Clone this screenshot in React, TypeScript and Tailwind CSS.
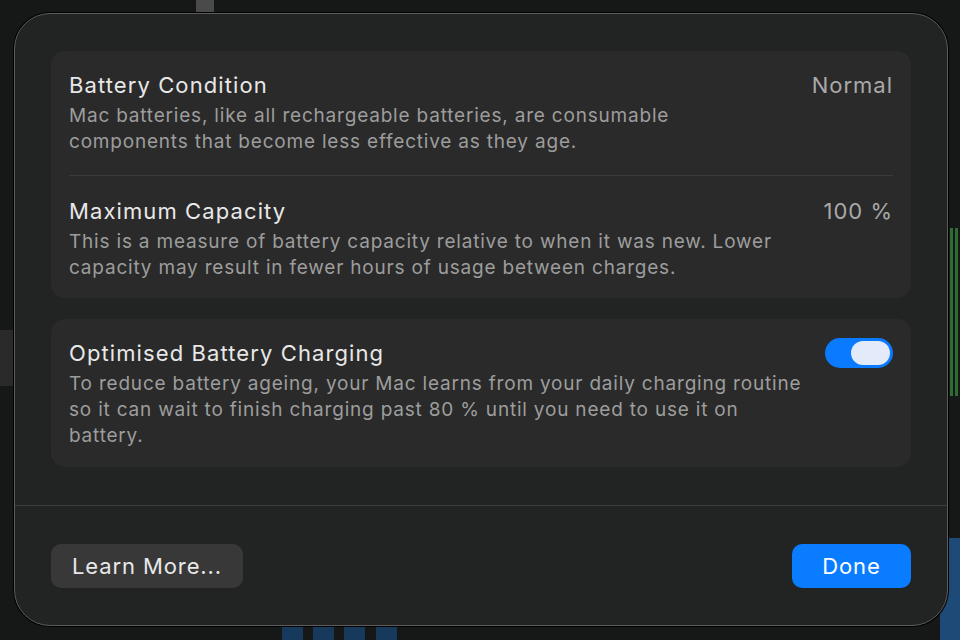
import React from "react";

const Section = ({
  title,
  value,
  desc,
}: {
  title: string;
  value?: string;
  desc: string[];
}) => (
  <div className="flex items-start justify-between gap-6">
    <div className="flex flex-col gap-[4px]">
      <div className="text-[22px] leading-[28px] tracking-[1.1px] text-[#e8e8e8]">{title}</div>
      <div className="text-[19px] leading-[26px] tracking-[0.8px] text-[#9d9d9d]">
        {desc.map((line, i) => (
          <div key={i} className="whitespace-nowrap">
            {line}
          </div>
        ))}
      </div>
    </div>
    {value && (
      <div className="whitespace-nowrap text-[22px] leading-[28px] tracking-[1px] text-[#a9a9a9]">
        {value}
      </div>
    )}
  </div>
);

const Toggle = () => (
  <div className="mt-[-1px] flex h-[30px] w-[68px] shrink-0 items-center justify-end rounded-full bg-[#0a7aff] px-[3px]">
    <div className="h-[24px] w-[39px] rounded-full bg-[#e3eafa]" />
  </div>
);

export default function App() {
  return (
    <div
      className="relative h-[640px] w-[960px] overflow-hidden bg-[#161717]"
      style={{ fontFamily: "Inter, 'Noto Sans', sans-serif" }}
    >
      {/* bits of the window behind the sheet */}
      <div className="absolute left-[196px] top-0 h-[12px] w-[18px] bg-[#4a4a4a]" />
      <div className="absolute left-0 top-[330px] h-[56px] w-[14px] bg-[#2a2a2a]" />
      <div className="absolute left-[950px] top-[228px] h-[168px] w-[3px] bg-[#2f6b35]" />
      <div className="absolute left-[955px] top-[228px] h-[168px] w-[3px] bg-[#2f6b35]" />
      <div className="absolute left-[940px] top-[538px] h-[102px] w-[20px] bg-[#1e4a78]" />
      <div className="absolute left-[282px] top-[627px] h-[13px] w-[21px] bg-[#17395c]" />
      <div className="absolute left-[313px] top-[627px] h-[13px] w-[21px] bg-[#17395c]" />
      <div className="absolute left-[344px] top-[627px] h-[13px] w-[21px] bg-[#17395c]" />
      <div className="absolute left-[376px] top-[627px] h-[13px] w-[21px] bg-[#17395c]" />

      <div className="relative ml-[14px] mt-[13px] flex h-[613px] w-[934px] flex-col rounded-[36px] border border-[#5c5c5c] bg-[#222323] shadow-[0_0_0_1px_#000]">
        <div className="flex flex-col gap-[21px] px-[36px] pt-[37px]">
          <div className="rounded-[14px] bg-[#2a2a2a] px-[18px] pb-[17px] pt-[20px]">
            <Section
              title="Battery Condition"
              value="Normal"
              desc={[
                "Mac batteries, like all rechargeable batteries, are consumable",
                "components that become less effective as they age.",
              ]}
            />
            <div className="mb-[21px] mt-[20px] h-px bg-[#3a3a3a]" />
            <Section
              title="Maximum Capacity"
              value="100 %"
              desc={[
                "This is a measure of battery capacity relative to when it was new. Lower",
                "capacity may result in fewer hours of usage between charges.",
              ]}
            />
          </div>
          <div className="flex items-start justify-between rounded-[14px] bg-[#2a2a2a] px-[18px] pb-[18px] pt-[20px]">
            <Section
              title="Optimised Battery Charging"
              desc={[
                "To reduce battery ageing, your Mac learns from your daily charging routine",
                "so it can wait to finish charging past 80 % until you need to use it on",
                "battery.",
              ]}
            />
            <Toggle />
          </div>
        </div>
        <div className="mt-[38px] h-px bg-[#3b3b3b]" />
        <div className="flex items-center justify-between px-[36px] pt-[38px]">
          <button className="h-[44px] w-[192px] rounded-[10px] bg-[#383838] text-[22px] tracking-[0.9px] text-[#e8e8e8]">
            Learn More...
          </button>
          <button className="h-[44px] w-[119px] rounded-[10px] bg-[#0a7cff] text-[22px] tracking-[0.9px] text-white">
            Done
          </button>
        </div>
      </div>
    </div>
  );
}
